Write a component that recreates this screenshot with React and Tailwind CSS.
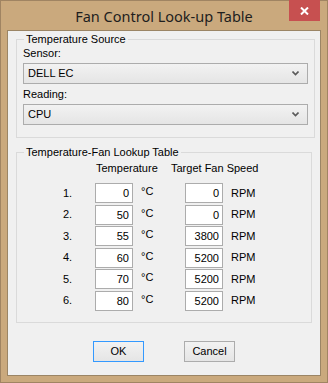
import React from 'react';

const rows = [
    { n: '1.', t: '0', s: '0' },
    { n: '2.', t: '50', s: '0' },
    { n: '3.', t: '55', s: '3800' },
    { n: '4.', t: '60', s: '5200' },
    { n: '5.', t: '70', s: '5200' },
    { n: '6.', t: '80', s: '5200' },
];

function Combo({ value }) {
    return (
        <div className="flex items-center justify-between h-[21px] w-[285px] border border-[#acacac] bg-gradient-to-b from-[#f2f2f2] to-[#e5e5e5] pl-[4px] pr-[8px]">
            <span>{value}</span>
            <svg width="7" height="5" viewBox="0 0 7 5">
                <path d="M0.5 0.5 L3.5 3.5 L6.5 0.5" fill="none" stroke="#5a5a5a" strokeWidth="1.6" />
            </svg>
        </div>
    );
}

function Field({ value }) {
    return (
        <div className="h-[20px] w-[38px] border border-[#acacac] bg-white text-right pr-[3px] leading-[18px]">
            {value}
        </div>
    );
}

export default function App() {
    return (
        <div className="w-[328px] h-[383px] bg-[#caa97d] border border-[#a08462] flex flex-col" style={{ fontFamily: '"Liberation Sans", Arial, sans-serif' }}>
            {/* title bar */}
            <div className="relative h-[29px] flex items-center justify-center">
                <span className="text-[14.5px] text-[#1e1e1e] pt-[2px]" style={{ fontFamily: '"Noto Sans", "Liberation Sans", sans-serif' }}>
                    Fan Control Look-up Table
                </span>
                <div className="absolute top-[-1px] right-[7px] w-[31px] h-[21px] bg-[#c75050] flex items-center justify-center">
                    <svg width="9" height="8" viewBox="0 0 9 8">
                        <path d="M1 0.5 L8 7.5 M8 0.5 L1 7.5" stroke="#fff" strokeWidth="2" />
                    </svg>
                </div>
            </div>

            {/* client area */}
            <div className="mx-[6px] h-[346px] border border-[#9b8565] bg-[#f0f0f0] text-[11px] text-black leading-[13px] flex flex-col">
                <fieldset className="mx-[8px] mt-[2px] h-[105px] border border-[#dadada] px-[6px]">
                    <legend className="ml-[1px] px-[2px]">Temperature Source</legend>
                    <div className="mt-[1px]">Sensor:</div>
                    <div className="mt-[3px]"><Combo value="DELL EC" /></div>
                    <div className="mt-[4px]">Reading:</div>
                    <div className="mt-[3px]"><Combo value="CPU" /></div>
                </fieldset>

                <fieldset className="mx-[8px] mt-[8px] h-[177px] border border-[#dadada]">
                    <legend className="ml-[7px] px-[2px]">Temperature-Fan Lookup Table</legend>
                    <div className="flex mt-[3px]">
                        <span className="ml-[79px] w-[75px]">Temperature</span>
                        <span>Target Fan Speed</span>
                    </div>
                    <div className="flex flex-col gap-[1.5px] mt-[8px]">
                        {rows.map((r) => (
                            <div key={r.n} className="flex items-center">
                                <span className="ml-[46px] w-[32px]">{r.n}</span>
                                <Field value={r.t} />
                                <span className="w-[52px] pl-[8px] self-start pt-[2px]">°C</span>
                                <Field value={r.s} />
                                <span className="pl-[8px]">RPM</span>
                            </div>
                        ))}
                    </div>
                </fieldset>

                <div className="flex justify-center gap-[40px] mt-[18px]">
                    <button className="w-[51px] h-[21px] border border-[#3399ff] bg-gradient-to-b from-[#f2f2f2] to-[#e5e5e5]">OK</button>
                    <button className="w-[51px] h-[21px] border border-[#acacac] bg-gradient-to-b from-[#f2f2f2] to-[#e5e5e5]">Cancel</button>
                </div>
            </div>
        </div>
    );
}
